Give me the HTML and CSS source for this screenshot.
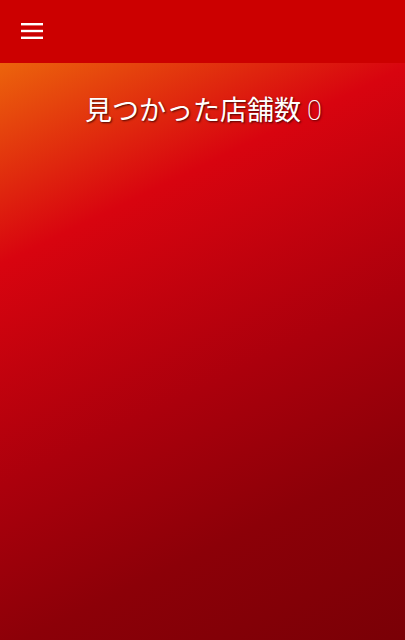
FILE: index.html
```html
<!DOCTYPE html>
<html lang="ja">
<head>
<meta charset="utf-8">
<link rel="stylesheet" href="styles.css">
</head>
<body>
<div class="app">
  <header class="toolbar">
    <button class="menu-btn" aria-label="menu">
      <svg width="22" height="16" viewBox="0 0 22 16"><rect x="0" y="0" width="22" height="2.4" fill="#fff"/><rect x="0" y="6.8" width="22" height="2.4" fill="#fff"/><rect x="0" y="13.6" width="22" height="2.4" fill="#fff"/></svg>
    </button>
  </header>
  <main class="content">
    <h1 class="count">見つかった店舗数 <span class="num">0</span></h1>
  </main>
</div>
</body>
</html>
```
FILE: styles.css
```css
html, body {
  margin: 0;
  padding: 0;
  height: 100%;
}
body {
  font-family: "Noto Sans CJK JP", "Noto Sans", sans-serif;
}
.app {
  display: flex;
  flex-direction: column;
  height: 640px;
}
.toolbar {
  height: 63px;
  flex: none;
  background: #cc0000;
  display: flex;
  align-items: center;
  padding-left: 21px;
}
.menu-btn {
  background: none;
  border: 0;
  padding: 0;
  margin-top: -1px;
  display: flex;
}
.content {
  flex: 1;
  background: linear-gradient(154deg, #ec640c 0%, #d8040f 26%, #ab000c 55%, #8c0008 76%, #7a0006 100%);
  display: flex;
  flex-direction: column;
  align-items: center;
  padding-top: 27px;
}
.count {
  margin: 0;
  font-size: 27px;
  font-weight: 400;
  color: #fff;
  line-height: 38px;
  text-shadow: 1px 1px 2px rgba(50,0,0,0.85);
  padding-left: 2px;
}
.num {
  font-weight: 200;
  font-family: Roboto, "Noto Sans", sans-serif;
}
```
